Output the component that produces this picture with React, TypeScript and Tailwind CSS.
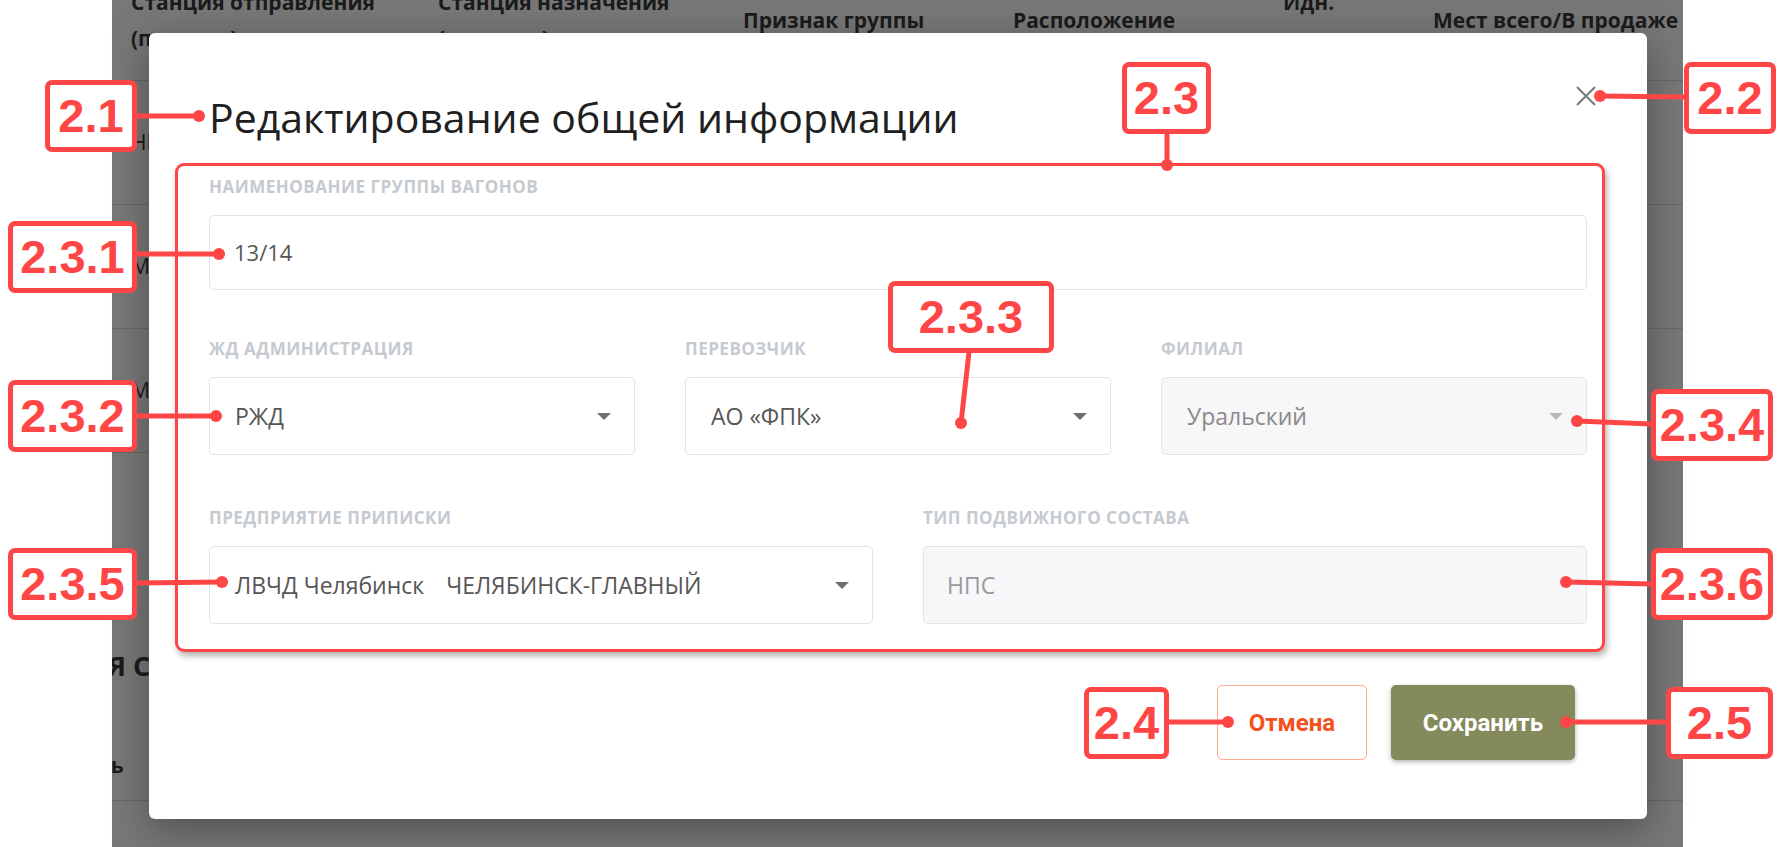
import React from 'react';

const red = '#ff4646';

function Caret({ color }: { color: string }) {
  return (
    <svg width="14" height="7" viewBox="0 0 14 7" className="shrink-0">
      <polygon points="0,0 14,0 7,7" fill={color} />
    </svg>
  );
}

function FieldLabel({ children }: { children: React.ReactNode }) {
  return (
    <div className="mb-[16px] text-[17px] font-bold uppercase leading-[24px] tracking-[0.5px] text-[#c5cad0]">
      {children}
    </div>
  );
}

function SelectBox({ value, disabled }: { value: React.ReactNode; disabled?: boolean }) {
  return (
    <div
      className={`flex h-[78px] items-center justify-between rounded-[5px] border border-[#e3e4e7] pl-[25px] pr-[23px] text-[23px] ${
        disabled ? 'bg-[#f7f7f9] text-[#8a8a8a]' : 'bg-white text-[#565656]'
      }`}
    >
      <span className="whitespace-nowrap">{value}</span>
      <Caret color={disabled ? '#b9b9b9' : '#6f6f6f'} />
    </div>
  );
}

// annotation callouts laid over the screenshot
const callouts = [
  { id: '2.1', x: 45, y: 80, w: 92 },
  { id: '2.3.1', x: 8, y: 221, w: 129 },
  { id: '2.2', x: 1684, y: 62, w: 92 },
  { id: '2.3', x: 1122, y: 62, w: 89 },
  { id: '2.3.2', x: 8, y: 380, w: 129 },
  { id: '2.3.3', x: 888, y: 281, w: 166 },
  { id: '2.3.4', x: 1651, y: 389, w: 122 },
  { id: '2.3.5', x: 8, y: 548, w: 129 },
  { id: '2.3.6', x: 1651, y: 548, w: 122 },
  { id: '2.4', x: 1084, y: 687, w: 85 },
  { id: '2.5', x: 1666, y: 687, w: 107 },
];

const leaders = [
  [137, 116, 199, 116],
  [137, 254, 219, 254],
  [1684, 97, 1600, 96],
  [1167, 133, 1167, 165],
  [137, 416, 216, 416],
  [969, 352, 961, 423],
  [1651, 424, 1577, 421],
  [137, 583, 222, 582],
  [1651, 584, 1566, 582],
  [1169, 722, 1228, 722],
  [1666, 722, 1566, 722],
];

export default function App() {
  return (
    <div className="relative h-[847px] w-[1780px] overflow-hidden bg-white font-['Open_Sans',sans-serif]">
      {/* dimmed page behind the dialog */}
      <div className="ml-[112px] h-full w-[1571px] overflow-hidden bg-[#787878] text-[#1b1b1b]">
        <div className="flex h-[81px] items-center border-b border-[#686868] pb-[41px] pl-[19px] text-[21px] font-bold leading-[36px]">
          <div className="w-[307px]">Станция отправления<br />(посадки)</div>
          <div className="w-[305px]">Станция назначения<br />(высадки)</div>
          <div className="w-[270px]">Признак группы</div>
          <div className="w-[270px]">Расположение</div>
          <div className="w-[150px]">Идн.<br />группы</div>
          <div>Мест всего/В продаже</div>
        </div>
        {['НИЖНИЙ НОВГОРОД', 'МОСКВА КАЗАНСКАЯ', 'МОСКВА КАЗАНСКАЯ'].map((s, i) => (
          <div key={i} className="flex h-[124px] items-center border-b border-[#686868] pl-[19px] text-[21px]">
            {s}
          </div>
        ))}
        <div className="mt-[195px] -ml-[196px] whitespace-nowrap text-[27px] font-bold leading-[36px]">ИНФОРМАЦИЯ СОСТАВА</div>
        <div className="mt-[66px] -ml-[74px] text-[21px] font-bold leading-[30px]">Модель</div>
        <div className="mt-[20px] border-b border-[#686868]" />
      </div>

      {/* dialog */}
      <div className="absolute left-[149px] top-[33px] h-[786px] w-[1498px] rounded-[6px] bg-white px-[60px] pt-[60px] shadow-[0_10px_40px_rgba(0,0,0,0.35)]">
        <button className="absolute right-[51px] top-[53px] text-[#777]" aria-label="Закрыть">
          <svg width="20" height="20" viewBox="0 0 20 20">
            <path d="M1 1L19 19M19 1L1 19" stroke="currentColor" strokeWidth="2" />
          </svg>
        </button>
        <h2 className="text-[41px] leading-[48px] text-[#202020]">Редактирование общей информации</h2>

        <div className="mt-[34px]">
          <FieldLabel>Наименование группы вагонов</FieldLabel>
          <div className="flex h-[75px] items-center rounded-[5px] border border-[#e3e4e7] px-[24px] text-[22px] text-[#565656]">
            13/14
          </div>
        </div>

        <div className="mt-[47px] grid grid-cols-3 gap-[50px]">
          <div>
            <FieldLabel>ЖД администрация</FieldLabel>
            <SelectBox value="РЖД" />
          </div>
          <div>
            <FieldLabel>Перевозчик</FieldLabel>
            <SelectBox value="АО «ФПК»" />
          </div>
          <div>
            <FieldLabel>Филиал</FieldLabel>
            <SelectBox value="Уральский" disabled />
          </div>
        </div>

        <div className="mt-[51px] grid grid-cols-2 gap-[50px]">
          <div>
            <FieldLabel>Предприятие приписки</FieldLabel>
            <SelectBox
              value={
                <>
                  ЛВЧД Челябинск<span className="ml-[22px]">ЧЕЛЯБИНСК-ГЛАВНЫЙ</span>
                </>
              }
            />
          </div>
          <div>
            <FieldLabel>Тип подвижного состава</FieldLabel>
            <div className="flex h-[78px] items-center rounded-[5px] border border-[#e3e4e7] bg-[#f7f7f9] px-[23px] text-[23px] text-[#999]">
              НПС
            </div>
          </div>
        </div>

        <div className="mt-[61px] flex justify-end gap-[24px] pr-[12px] font-['Roboto',sans-serif] text-[24px] font-bold">
          <button className="h-[75px] w-[150px] rounded-[5px] border border-[#ffab8f] bg-white text-[#f4511e]">
            Отмена
          </button>
          <button className="h-[75px] w-[184px] rounded-[5px] bg-[#848a5b] text-white shadow-[0_2px_5px_rgba(0,0,0,0.3)]">
            Сохранить
          </button>
        </div>
      </div>

      {/* annotation frame round the form */}
      <div className="absolute left-[175px] top-[163px] h-[489px] w-[1430px] rounded-[9px] border-[3px] border-[#ff4646] shadow-[2px_4px_6px_rgba(0,0,0,0.3)]" />

      <svg className="pointer-events-none absolute left-0 top-0" width="1780" height="847">
        {leaders.map(([x1, y1, x2, y2], i) => (
          <g key={i}>
            <line x1={x1} y1={y1} x2={x2} y2={y2} stroke={red} strokeWidth="5" />
            <circle cx={x2} cy={y2} r="6" fill={red} />
          </g>
        ))}
      </svg>

      {callouts.map((c) => (
        <div
          key={c.id}
          className="absolute flex h-[72px] items-center justify-center rounded-[7px] border-[5px] border-[#ff4646] bg-white font-['Liberation_Sans',sans-serif] text-[47px] font-bold text-[#ff4646]"
          style={{ left: c.x, top: c.y, width: c.w }}
        >
          {c.id}
        </div>
      ))}
    </div>
  );
}
